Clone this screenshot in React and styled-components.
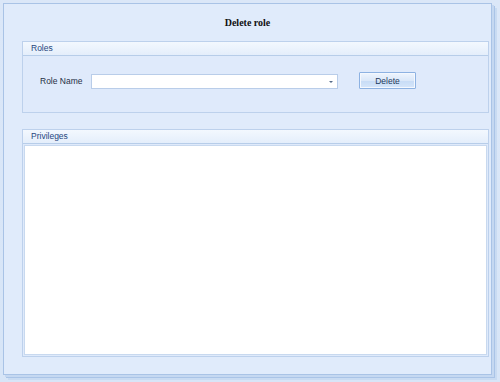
import React from "react";
import styled, { createGlobalStyle } from "styled-components";

const Global = createGlobalStyle`
  html, body { margin: 0; padding: 0; }
  body { width: 500px; height: 382px; overflow: hidden; background: #d9e6f7; font-family: "Liberation Sans", Arial, sans-serif; }
`;

const Screen = styled.div`
  width: 500px;
  height: 382px;
  box-sizing: border-box;
  padding: 3px 8px 7px 3px;
  background: linear-gradient(#dbe7f8, #d7e5f7);
`;

const Frame = styled.div`
  box-sizing: border-box;
  height: 100%;
  border: 1px solid #a9c3e6;
  background: #e0ebfb;
  box-shadow: 2px 2px 0 #c5d8f1, 3px 3px 0 #aac4e7, 5px 5px 0 #c9dbf2;
  display: flex;
  flex-direction: column;
  padding: 0 2px 17px 18px;
`;

const Title = styled.div`
  height: 37px;
  display: flex;
  align-items: center;
  justify-content: center;
  font-family: "Liberation Serif", serif;
  font-weight: bold;
  font-size: 10px;
  color: #111;
  margin-right: 16px;
`;

const Group = styled.div`
  box-sizing: border-box;
  border: 1px solid #bdd1ec;
  background: #dfeafb;
  display: flex;
  flex-direction: column;
  ${(p) => (p.$grow ? "flex: 1;" : "")}
`;

const GroupHeader = styled.div`
  height: 13px;
  border-bottom: 1px solid #b7cde9;
  background: linear-gradient(#f3f8fe, #e4eefb);
  font-family: "Liberation Sans", Arial, sans-serif;
  font-size: 8.5px;
  color: #24457e;
  padding-left: 8px;
  line-height: 13px;
`;

const RolesBody = styled.div`
  box-sizing: border-box;
  height: 56px;
  display: flex;
  align-items: flex-start;
  padding: 18px 0 0 17px;
`;

const Label = styled.span`
  font-family: "Liberation Sans", Arial, sans-serif;
  font-size: 8.5px;
  line-height: 15px;
  color: #1f2f45;
  width: 51px;
`;

const Combo = styled.div`
  box-sizing: border-box;
  width: 247px;
  height: 15px;
  background: #fff;
  border: 1px solid #b9cde9;
  display: flex;
  align-items: center;
  justify-content: flex-end;
  padding-right: 4px;
`;

const Arrow = styled.span`
  width: 0;
  height: 0;
  border-left: 2px solid transparent;
  border-right: 2px solid transparent;
  border-top: 2px solid #556a88;
`;

const Button = styled.button`
  box-sizing: border-box;
  margin-left: 21px;
  margin-top: -2px;
  width: 57px;
  height: 17px;
  border: 1px solid #8db2e2;
  border-radius: 1px;
  background: linear-gradient(#eef5fd 0%, #dbe8f9 50%, #c7dcf6 51%, #d6e6fa 100%);
  box-shadow: inset 0 0 0 1px #f4f8fe;
  font-family: "Liberation Sans", Arial, sans-serif;
  font-size: 8.5px;
  color: #1e395b;
  padding: 0;
`;

const Spacer = styled.div`
  height: 16px;
`;

const ListArea = styled.div`
  flex: 1;
  margin: 1px;
  background: #fff;
  border: 1px solid #c8d9ef;
`;

export default function App() {
  return (
    <Screen>
      <Global />
      <Frame>
        <Title>Delete role</Title>
        <Group>
          <GroupHeader>Roles</GroupHeader>
          <RolesBody>
            <Label>Role Name</Label>
            <Combo>
              <Arrow />
            </Combo>
            <Button>Delete</Button>
          </RolesBody>
        </Group>
        <Spacer />
        <Group $grow>
          <GroupHeader>Privileges</GroupHeader>
          <ListArea />
        </Group>
      </Frame>
    </Screen>
  );
}
